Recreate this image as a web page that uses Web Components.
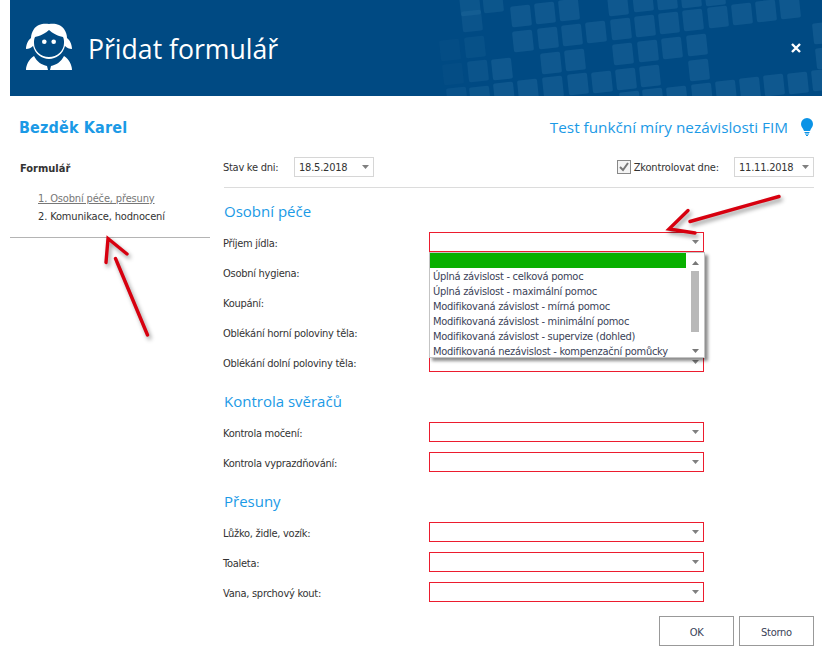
<!DOCTYPE html>
<html lang="cs">
<head>
<meta charset="utf-8">
<title>Přidat formulář</title>
<style>
  html, body { margin: 0; background: #fff; }
  body { font: 11px "DejaVu Sans", "Noto Sans", sans-serif; font-stretch: condensed; color: #333; }
  .page { position: relative; width: 832px; height: 663px; overflow: hidden; }
  .body { display: flex; margin: 0 10px; }
</style>
</head>
<body>
<div class="page">
  <app-header>Přidat formulář</app-header>
  <patient-bar name="Bezděk Karel">Test funkční míry nezávislosti FIM</patient-bar>
  <div class="body">
    <side-nav heading="Formulář">
      <nav-item active>1. Osobní péče, přesuny</nav-item>
      <nav-item>2. Komunikace, hodnocení</nav-item>
    </side-nav>
    <form-panel>
      <form-toolbar></form-toolbar>
      <form-section heading="Osobní péče">
        <form-row label="Příjem jídla:" open></form-row>
        <form-row label="Osobní hygiena:"></form-row>
        <form-row label="Koupání:"></form-row>
        <form-row label="Oblékání horní poloviny těla:"></form-row>
        <form-row label="Oblékání dolní poloviny těla:"></form-row>
      </form-section>
      <form-section heading="Kontrola svěračů">
        <form-row label="Kontrola močení:"></form-row>
        <form-row label="Kontrola vyprazdňování:"></form-row>
      </form-section>
      <form-section heading="Přesuny">
        <form-row label="Lůžko, židle, vozík:"></form-row>
        <form-row label="Toaleta:"></form-row>
        <form-row label="Vana, sprchový kout:"></form-row>
      </form-section>
      <dialog-buttons></dialog-buttons>
    </form-panel>
  </div>
  <red-arrows></red-arrows>
</div>

<script>
const ARROW = `<svg width="7" height="4" viewBox="0 0 7 4"><path d="M0 0h7L3.500 4z" fill="#808080"/></svg>`;
const UI_TEXT = `font: 11px "DejaVu Sans", "Noto Sans", sans-serif; font-stretch: condensed; letter-spacing: -.27px;`;

// tile centres in the header, read off the reference
const TILES = [
  [470,5,.8],[493,2,.8],[618,5],[643,1],[667,-1],[691,-3],[715,-5],
  [521,16],[545,13],[569,10],[472,21,.7],
  [596,32],[621,29],[645,26],[669,23],[693,20],[718,17],[742,14],[766,11],[790,8],
  [523,41],[548,38],[572,35],[823,33],
  [623,54],[648,51],[672,48],[697,45],[450,50,.25],[475,47,.5],
  [551,63],[575,60],[826,58],[699,70],
  [453,74,.25],[478,71,.7],[502,69],
  [602,82],[626,79],[650,76],
  [457,98,.6],[480,97,.8],[504,93],[528,90],[553,87],[578,84],
  [630,102],[653,99],[677,97],[702,94],[726,91],[750,88],[774,85],[798,83],[822,80]
];

class AppHeader extends HTMLElement {
  constructor() {
    super();
    const shadow = this.attachShadow({ mode: 'open' });
    const tiles = TILES.map(([x, y, o]) =>
      `<rect x="${x - 10}" y="${y - 10.500}" width="20" height="21" rx="2" fill="#2c76a8" opacity="${(o || 1) * 0.34}" transform="rotate(-6 ${x} ${y})"/>`).join('');
    shadow.innerHTML = `
    <style>
      :host {
        display: flex;
        align-items: center;
        position: relative;
        height: 96px;
        margin: 0 10px;
        background: #004a83;
        overflow: hidden;
        color: #fff;
      }
      .tiles { position: absolute; left: -10px; top: 0; }
      .logo { position: relative; margin-left: 15px; }
      .title {
        position: relative;
        margin: 2px 0 0 15px;
        font: 26.600px "Open Sans", "Noto Sans", sans-serif;
        white-space: nowrap;
      }
      .close { position: absolute; right: 20px; top: 42px; }
    </style>
    <svg class="tiles" width="832" height="96">${tiles}</svg>
    <svg class="logo" width="48" height="50" viewBox="26 24 48 50">
      <path fill="#fff" fill-rule="evenodd" d="M50 25c-5-1-12 0-15 5-2 3-3 6-3 9-3 2-5 7-5 11 3 0 5-1 7-3 2 8 9 13 16 13s14-5 16-13c2 2 4 3 7 3 0-4-2-9-5-11 0-3-1-6-3-9-3-5-10-6-15-5zM50 31c3 3 9 6 14 7 1 2 1 4 1 6 0 8-7 14-15 14s-15-6-15-14c0-2 0-4 1-6 5-1 11-4 14-7z"/>
      <circle cx="45.300" cy="42.800" r="2.300" fill="#fff"/>
      <circle cx="54.700" cy="42.800" r="2.300" fill="#fff"/>
      <path fill="#fff" d="M27 71c0-5 3-11 8-14 3 6 8 9 13 10l1 4zM73 71c0-5-3-11-8-14-3 6-8 9-13 10l-1 4z"/>
    </svg>
    <div class="title"><slot></slot></div>
    <svg class="close" width="12" height="12" viewBox="0 0 12 12"><path d="M2 2l8 8M10 2l-8 8" stroke="#fff" stroke-width="2.400"/></svg>
    `;
  }
}

class PatientBar extends HTMLElement {
  constructor() {
    super();
    const shadow = this.attachShadow({ mode: 'open' });
    shadow.innerHTML = `
    <style>
      :host {
        display: flex;
        align-items: center;
        justify-content: space-between;
        height: 61px;
        padding: 0 19px;
        color: #1b9ae6;
      }
      .name { padding-top: 2px; font: bold 16px "DejaVu Sans", sans-serif; font-stretch: condensed; letter-spacing: .15px; }
      .test { display: flex; align-items: center; font: 15.300px "Open Sans", sans-serif; }
      svg { margin-left: 13px; }
    </style>
    <div class="name"></div>
    <div class="test">
      <slot></slot>
      <svg width="12" height="18" viewBox="1 0 12 18">
        <path fill="#0b93e6" d="M7 0a6 6 0 0 1 6 6c0 3-2 4-3 7H4C3 10 1 9 1 6a6 6 0 0 1 6-6z"/>
        <path d="M4.500 14.500h5M5 16h4M6 17.500h2" stroke="#0b93e6" stroke-width="1"/>
      </svg>
    </div>
    `;
    shadow.querySelector('.name').textContent = this.getAttribute('name');
  }
}

class SideNav extends HTMLElement {
  constructor() {
    super();
    const shadow = this.attachShadow({ mode: 'open' });
    shadow.innerHTML = `
    <style>
      :host {
        display: block;
        box-sizing: border-box;
        width: 200px;
        height: 81px;
        margin-right: 14px;
        border-bottom: 1px solid #b4b4b4;
      }
      h3 { margin: 0 0 0 10px; padding-top: 5px; font: bold 11px/14px "DejaVu Sans", sans-serif; font-stretch: condensed; color: #333; }
      .items { padding: 14px 0 0 28px; }
    </style>
    <h3></h3>
    <div class="items"><slot></slot></div>
    `;
    shadow.querySelector('h3').textContent = this.getAttribute('heading');
  }
}

class NavItem extends HTMLElement {
  constructor() {
    super();
    const shadow = this.attachShadow({ mode: 'open' });
    shadow.innerHTML = `
    <style>
      :host { display: block; height: 18px; ${UI_TEXT} letter-spacing: -.15px; line-height: 18px; color: #333; white-space: nowrap; }
      :host([active]) { color: #777; text-decoration: underline; }
    </style>
    <slot></slot>
    `;
  }
}

class ComboBox extends HTMLElement {
  constructor() {
    super();
    const shadow = this.attachShadow({ mode: 'open' });
    shadow.innerHTML = `
    <style>
      :host {
        display: flex;
        align-items: center;
        justify-content: space-between;
        position: relative;
        box-sizing: border-box;
        width: 275px;
        height: 20px;
        padding: 0 4px 0 4px;
        border: 1px solid #ec1c2e;
        background: #fff;
        ${UI_TEXT}
        color: #333;
      }
      :host([plain]) { width: 80px; border-color: #d6d6d6; }
      span { letter-spacing: -.22px; }
    </style>
    <span></span>
    ${ARROW}
    `;
    shadow.querySelector('span').textContent = this.getAttribute('value') || '';
    if (this.hasAttribute('open')) {
      shadow.appendChild(document.createElement('combo-popup'));
    }
  }
}

class ComboPopup extends HTMLElement {
  constructor() {
    super();
    const shadow = this.attachShadow({ mode: 'open' });
    const options = [
      'Úplná závislost - celková pomoc',
      'Úplná závislost - maximální pomoc',
      'Modifikovaná závislost - mírná pomoc',
      'Modifikovaná závislost - minimální pomoc',
      'Modifikovaná závislost - supervize (dohled)',
      'Modifikovaná nezávislost - kompenzační pomůcky'
    ];
    shadow.innerHTML = `
    <style>
      :host {
        display: flex;
        position: absolute;
        left: -1px;
        top: 19px;
        z-index: 5;
        box-sizing: border-box;
        width: 276px;
        height: 106px;
        border: 1px solid #c4c4c4;
        background: #fff;
        box-shadow: 3px 3px 3px rgba(0, 0, 0, .45);
      }
      .list { flex: 1; min-width: 0; overflow: hidden; }
      .row { box-sizing: border-box; height: 15px; padding: 1px 0 0 3px; ${UI_TEXT} line-height: 15px; color: #3a4258; white-space: nowrap; }
      .row.sel { background: #08b000; }
      .bar { display: flex; flex-direction: column; align-items: center; width: 18px; }
      .bar svg { margin-top: 8px; }
      .thumb { width: 8px; height: 61px; margin-top: 6px; background: #b9b9b9; }
      .bar svg.down { margin-top: 17px; }
    </style>
    <div class="list">
      <div class="row sel"></div>
      ${options.map((o) => `<div class="row">${o}</div>`).join('')}
    </div>
    <div class="bar">
      <svg width="7" height="4" viewBox="0 0 7 4"><path d="M0 4h7L3.500 0z" fill="#777"/></svg>
      <div class="thumb"></div>
      <svg class="down" width="7" height="4" viewBox="0 0 7 4"><path d="M0 0h7L3.500 4z" fill="#777"/></svg>
    </div>
    `;
  }
}

class FormToolbar extends HTMLElement {
  constructor() {
    super();
    const shadow = this.attachShadow({ mode: 'open' });
    shadow.innerHTML = `
    <style>
      :host {
        display: flex;
        align-items: center;
        box-sizing: border-box;
        height: 31px;
        padding-bottom: 10px;
        margin-right: 8px;
        border-bottom: 1px solid #dcdcdc;
        ${UI_TEXT}
        color: #333;
      }
      .stav { width: 71px; margin-left: -1px; padding-top: 1px; }
      .check { display: flex; align-items: center; gap: 3px; margin-left: auto; margin-right: 15px; white-space: nowrap; }
      .check span { padding-top: 1px; letter-spacing: -.15px; }
      svg.box { flex: none; }
    </style>
    <span class="stav">Stav ke dni:</span>
    <combo-box plain value="18.5.2018"></combo-box>
    <div class="check">
      <svg class="box" width="14" height="14" viewBox="0 0 14 14">
        <rect x=".5" y=".5" width="13" height="13" fill="#f4f4f4" stroke="#888"/>
        <path d="M3 7l3 3 5-7" fill="none" stroke="#777" stroke-width="2"/>
      </svg>
      <span>Zkontrolovat dne:</span>
    </div>
    <combo-box plain value="11.11.2018"></combo-box>
    `;
  }
}

class FormPanel extends HTMLElement {
  constructor() {
    super();
    const shadow = this.attachShadow({ mode: 'open' });
    shadow.innerHTML = `
    <style>
      :host { display: block; flex: 1; min-width: 0; }
    </style>
    <slot></slot>
    `;
  }
}

class FormSection extends HTMLElement {
  constructor() {
    super();
    const shadow = this.attachShadow({ mode: 'open' });
    shadow.innerHTML = `
    <style>
      :host { display: block; }
      h2 {
        box-sizing: border-box;
        height: 40px;
        margin: 0;
        padding-top: 11px;
        font: 15px/24px "Open Sans", sans-serif;
        color: #1b9ae6;
      }
      .rows { margin: -1px 0 1px; }
    </style>
    <h2></h2>
    <div class="rows"><slot></slot></div>
    `;
    shadow.querySelector('h2').textContent = this.getAttribute('heading');
  }
}

class FormRow extends HTMLElement {
  constructor() {
    super();
    const shadow = this.attachShadow({ mode: 'open' });
    shadow.innerHTML = `
    <style>
      :host {
        display: flex;
        align-items: center;
        height: 30px;
        ${UI_TEXT}
        color: #333;
      }
      label { width: 206px; margin-left: -1px; padding-top: 2px; }
    </style>
    <label></label>
    <combo-box ${this.hasAttribute('open') ? 'open' : ''}></combo-box>
    `;
    shadow.querySelector('label').textContent = this.getAttribute('label');
  }
}

class DialogButtons extends HTMLElement {
  constructor() {
    super();
    const shadow = this.attachShadow({ mode: 'open' });
    shadow.innerHTML = `
    <style>
      :host {
        display: flex;
        justify-content: flex-end;
        gap: 5px;
        margin: 9px 8px 0 0;
      }
      button {
        width: 75px;
        height: 30px;
        padding: 2px 0 0;
        border: 1px solid #999;
        background: #fff;
        ${UI_TEXT}
        color: #3a4258;
      }
    </style>
    <button>OK</button>
    <button>Storno</button>
    `;
  }
}

// hand drawn annotations lying over the dialog
class RedArrows extends HTMLElement {
  constructor() {
    super();
    const shadow = this.attachShadow({ mode: 'open' });
    shadow.innerHTML = `
    <style>
      :host { position: absolute; left: 0; top: 0; z-index: 10; pointer-events: none; }
      svg { display: block; filter: drop-shadow(2px 3px 2px rgba(0, 0, 0, .4)); }
      path { fill: none; stroke: #d7000f; stroke-width: 3.400; stroke-linecap: round; stroke-linejoin: miter; }
    </style>
    <svg width="832" height="663">
      <path d="M779 196.500L690 221.500"/>
      <path d="M688 210.500L669 229L695 233"/>
      <path d="M115.500 258.500L147.500 335"/>
      <path d="M106 262.500L108 238.500L127 254"/>
    </svg>
    `;
  }
}

customElements.define('combo-popup', ComboPopup);
customElements.define('combo-box', ComboBox);
customElements.define('app-header', AppHeader);
customElements.define('patient-bar', PatientBar);
customElements.define('side-nav', SideNav);
customElements.define('nav-item', NavItem);
customElements.define('form-toolbar', FormToolbar);
customElements.define('form-panel', FormPanel);
customElements.define('form-section', FormSection);
customElements.define('form-row', FormRow);
customElements.define('dialog-buttons', DialogButtons);
customElements.define('red-arrows', RedArrows);
</script>
</body>
</html>
